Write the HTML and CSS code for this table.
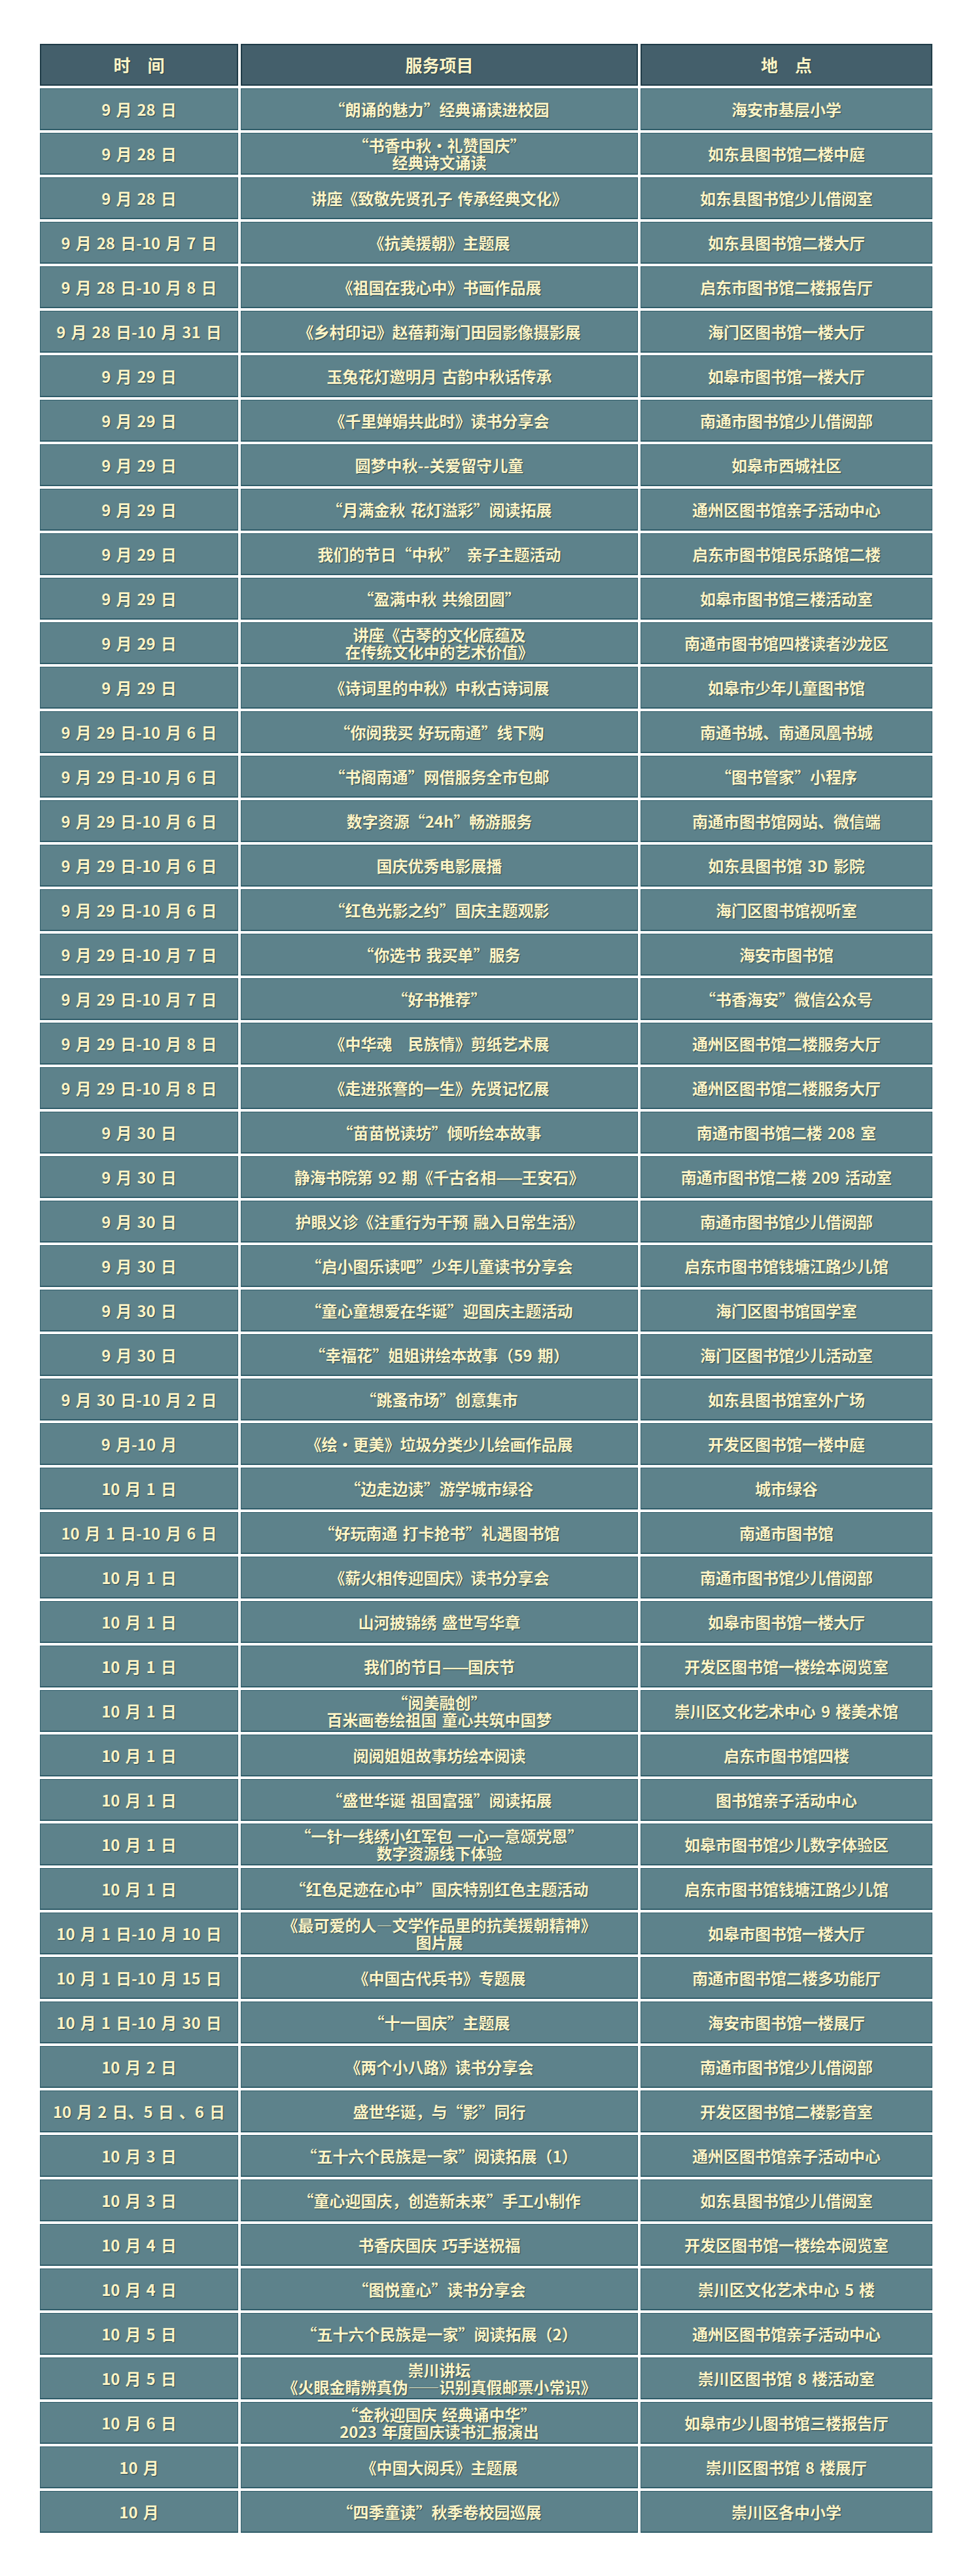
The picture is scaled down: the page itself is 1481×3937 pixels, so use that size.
FILE: index.html
```html
<!DOCTYPE html>
<html lang="zh-CN">
<head>
<meta charset="utf-8">
<title>国庆期间公共文化服务活动安排</title>
<link rel="stylesheet" href="styles.css">
</head>
<body>
<div class="schedule">
  <div class="cell head">时　间</div>
  <div class="cell head">服务项目</div>
  <div class="cell head">地　点</div>

  <div class="cell">9 月 28 日</div><div class="cell">“朗诵的魅力”经典诵读进校园</div><div class="cell">海安市基层小学</div>
  <div class="cell">9 月 28 日</div><div class="cell two"><span class="ln">“书香中秋·礼赞国庆”</span><span class="ln">经典诗文诵读</span></div><div class="cell">如东县图书馆二楼中庭</div>
  <div class="cell">9 月 28 日</div><div class="cell">讲座《致敬先贤孔子 传承经典文化》</div><div class="cell">如东县图书馆少儿借阅室</div>
  <div class="cell">9 月 28 日-10 月 7 日</div><div class="cell">《抗美援朝》主题展</div><div class="cell">如东县图书馆二楼大厅</div>
  <div class="cell">9 月 28 日-10 月 8 日</div><div class="cell">《祖国在我心中》书画作品展</div><div class="cell">启东市图书馆二楼报告厅</div>
  <div class="cell">9 月 28 日-10 月 31 日</div><div class="cell">《乡村印记》赵蓓莉海门田园影像摄影展</div><div class="cell">海门区图书馆一楼大厅</div>
  <div class="cell">9 月 29 日</div><div class="cell">玉兔花灯邀明月 古韵中秋话传承</div><div class="cell">如皋市图书馆一楼大厅</div>
  <div class="cell">9 月 29 日</div><div class="cell">《千里婵娟共此时》读书分享会</div><div class="cell">南通市图书馆少儿借阅部</div>
  <div class="cell">9 月 29 日</div><div class="cell">圆梦中秋--关爱留守儿童</div><div class="cell">如皋市西城社区</div>
  <div class="cell">9 月 29 日</div><div class="cell">“月满金秋 花灯溢彩”阅读拓展</div><div class="cell">通州区图书馆亲子活动中心</div>
  <div class="cell">9 月 29 日</div><div class="cell">我们的节日“中秋”　亲子主题活动</div><div class="cell">启东市图书馆民乐路馆二楼</div>
  <div class="cell">9 月 29 日</div><div class="cell">“盈满中秋 共飨团圆”</div><div class="cell">如皋市图书馆三楼活动室</div>
  <div class="cell">9 月 29 日</div><div class="cell two"><span class="ln">讲座《古琴的文化底蕴及</span><span class="ln">在传统文化中的艺术价值》</span></div><div class="cell">南通市图书馆四楼读者沙龙区</div>
  <div class="cell">9 月 29 日</div><div class="cell">《诗词里的中秋》中秋古诗词展</div><div class="cell">如皋市少年儿童图书馆</div>
  <div class="cell">9 月 29 日-10 月 6 日</div><div class="cell">“你阅我买 好玩南通”线下购</div><div class="cell">南通书城、南通凤凰书城</div>
  <div class="cell">9 月 29 日-10 月 6 日</div><div class="cell">“书阁南通”网借服务全市包邮</div><div class="cell">“图书管家”小程序</div>
  <div class="cell">9 月 29 日-10 月 6 日</div><div class="cell">数字资源“24h”畅游服务</div><div class="cell">南通市图书馆网站、微信端</div>
  <div class="cell">9 月 29 日-10 月 6 日</div><div class="cell">国庆优秀电影展播</div><div class="cell">如东县图书馆 3D 影院</div>
  <div class="cell">9 月 29 日-10 月 6 日</div><div class="cell">“红色光影之约”国庆主题观影</div><div class="cell">海门区图书馆视听室</div>
  <div class="cell">9 月 29 日-10 月 7 日</div><div class="cell">“你选书 我买单”服务</div><div class="cell">海安市图书馆</div>
  <div class="cell">9 月 29 日-10 月 7 日</div><div class="cell">“好书推荐”</div><div class="cell">“书香海安”微信公众号</div>
  <div class="cell">9 月 29 日-10 月 8 日</div><div class="cell">《中华魂　民族情》剪纸艺术展</div><div class="cell">通州区图书馆二楼服务大厅</div>
  <div class="cell">9 月 29 日-10 月 8 日</div><div class="cell">《走进张謇的一生》先贤记忆展</div><div class="cell">通州区图书馆二楼服务大厅</div>
  <div class="cell">9 月 30 日</div><div class="cell">“苗苗悦读坊”倾听绘本故事</div><div class="cell">南通市图书馆二楼 208 室</div>
  <div class="cell">9 月 30 日</div><div class="cell">静海书院第 92 期《千古名相<span class="dash">——</span>王安石》</div><div class="cell">南通市图书馆二楼 209 活动室</div>
  <div class="cell">9 月 30 日</div><div class="cell">护眼义诊《注重行为干预 融入日常生活》</div><div class="cell">南通市图书馆少儿借阅部</div>
  <div class="cell">9 月 30 日</div><div class="cell">“启小图乐读吧”少年儿童读书分享会</div><div class="cell">启东市图书馆钱塘江路少儿馆</div>
  <div class="cell">9 月 30 日</div><div class="cell">“童心童想爱在华诞”迎国庆主题活动</div><div class="cell">海门区图书馆国学室</div>
  <div class="cell">9 月 30 日</div><div class="cell">“幸福花”姐姐讲绘本故事（59 期）</div><div class="cell">海门区图书馆少儿活动室</div>
  <div class="cell">9 月 30 日-10 月 2 日</div><div class="cell">“跳蚤市场”创意集市</div><div class="cell">如东县图书馆室外广场</div>
  <div class="cell">9 月-10 月</div><div class="cell">《绘·更美》垃圾分类少儿绘画作品展</div><div class="cell">开发区图书馆一楼中庭</div>
  <div class="cell">10 月 1 日</div><div class="cell">“边走边读”游学城市绿谷</div><div class="cell">城市绿谷</div>
  <div class="cell">10 月 1 日-10 月 6 日</div><div class="cell">“好玩南通 打卡抢书”礼遇图书馆</div><div class="cell">南通市图书馆</div>
  <div class="cell">10 月 1 日</div><div class="cell">《薪火相传迎国庆》读书分享会</div><div class="cell">南通市图书馆少儿借阅部</div>
  <div class="cell">10 月 1 日</div><div class="cell">山河披锦绣 盛世写华章</div><div class="cell">如皋市图书馆一楼大厅</div>
  <div class="cell">10 月 1 日</div><div class="cell">我们的节日<span class="dash">——</span>国庆节</div><div class="cell">开发区图书馆一楼绘本阅览室</div>
  <div class="cell">10 月 1 日</div><div class="cell two"><span class="ln">“阅美融创”</span><span class="ln">百米画卷绘祖国 童心共筑中国梦</span></div><div class="cell">崇川区文化艺术中心 9 楼美术馆</div>
  <div class="cell">10 月 1 日</div><div class="cell">阅阅姐姐故事坊绘本阅读</div><div class="cell">启东市图书馆四楼</div>
  <div class="cell">10 月 1 日</div><div class="cell">“盛世华诞 祖国富强”阅读拓展</div><div class="cell">图书馆亲子活动中心</div>
  <div class="cell">10 月 1 日</div><div class="cell two"><span class="ln">“一针一线绣小红军包 一心一意颂党恩”</span><span class="ln">数字资源线下体验</span></div><div class="cell">如皋市图书馆少儿数字体验区</div>
  <div class="cell">10 月 1 日</div><div class="cell">“红色足迹在心中”国庆特别红色主题活动</div><div class="cell">启东市图书馆钱塘江路少儿馆</div>
  <div class="cell">10 月 1 日-10 月 10 日</div><div class="cell two"><span class="ln">《最可爱的人—文学作品里的抗美援朝精神》</span><span class="ln">图片展</span></div><div class="cell">如皋市图书馆一楼大厅</div>
  <div class="cell">10 月 1 日-10 月 15 日</div><div class="cell">《中国古代兵书》专题展</div><div class="cell">南通市图书馆二楼多功能厅</div>
  <div class="cell">10 月 1 日-10 月 30 日</div><div class="cell">“十一国庆”主题展</div><div class="cell">海安市图书馆一楼展厅</div>
  <div class="cell">10 月 2 日</div><div class="cell">《两个小八路》读书分享会</div><div class="cell">南通市图书馆少儿借阅部</div>
  <div class="cell">10 月 2 日、5 日 、6 日</div><div class="cell">盛世华诞，与“影”同行</div><div class="cell">开发区图书馆二楼影音室</div>
  <div class="cell">10 月 3 日</div><div class="cell">“五十六个民族是一家”阅读拓展（1）</div><div class="cell">通州区图书馆亲子活动中心</div>
  <div class="cell">10 月 3 日</div><div class="cell">“童心迎国庆，创造新未来”手工小制作</div><div class="cell">如东县图书馆少儿借阅室</div>
  <div class="cell">10 月 4 日</div><div class="cell">书香庆国庆 巧手送祝福</div><div class="cell">开发区图书馆一楼绘本阅览室</div>
  <div class="cell">10 月 4 日</div><div class="cell">“图悦童心”读书分享会</div><div class="cell">崇川区文化艺术中心 5 楼</div>
  <div class="cell">10 月 5 日</div><div class="cell">“五十六个民族是一家”阅读拓展（2）</div><div class="cell">通州区图书馆亲子活动中心</div>
  <div class="cell">10 月 5 日</div><div class="cell two"><span class="ln">崇川讲坛</span><span class="ln tight-dash">《火眼金睛辨真伪——识别真假邮票小常识》</span></div><div class="cell">崇川区图书馆 8 楼活动室</div>
  <div class="cell">10 月 6 日</div><div class="cell two"><span class="ln">“金秋迎国庆 经典诵中华”</span><span class="ln">2023 年度国庆读书汇报演出</span></div><div class="cell">如皋市少儿图书馆三楼报告厅</div>
  <div class="cell">10 月</div><div class="cell">《中国大阅兵》主题展</div><div class="cell">崇川区图书馆 8 楼展厅</div>
  <div class="cell">10 月</div><div class="cell">“四季童读”秋季卷校园巡展</div><div class="cell">崇川区各中小学</div>
</div>
</body>
</html>
```
FILE: styles.css
```css
html, body {
  margin: 0;
  padding: 0;
  background: #ffffff;
}

body {
  font-family: "Noto Sans CJK SC", "Noto Sans", sans-serif;
  font-weight: 700;
}

.schedule {
  display: grid;
  grid-template-columns: 303px 607px 446px;
  grid-auto-rows: 64px;
  gap: 4px;
  width: 1364px;
  margin: 67px 0 0 61px;
}

.cell {
  box-sizing: border-box;
  display: flex;
  align-items: center;
  justify-content: center;
  text-align: center;
  background: #5d828b;
  border: 1px solid #2f5c69;
  border-bottom-width: 2px;
  color: #fdf4c6;
  font-size: 24px;
  line-height: 26px;
  word-spacing: 2.6px;
  text-shadow: 1px 1px 1px rgba(22, 48, 58, 0.75);
  white-space: nowrap;
}

.cell.two {
  flex-direction: column;
}

.ln {
  display: block;
  height: 26px;
  line-height: 26px;
  overflow: visible;
}

.dash {
  letter-spacing: -2px;
}

.head {
  background: #445f6b;
  border: 2px solid #1f3b47;
  font-size: 26px;
}
```
